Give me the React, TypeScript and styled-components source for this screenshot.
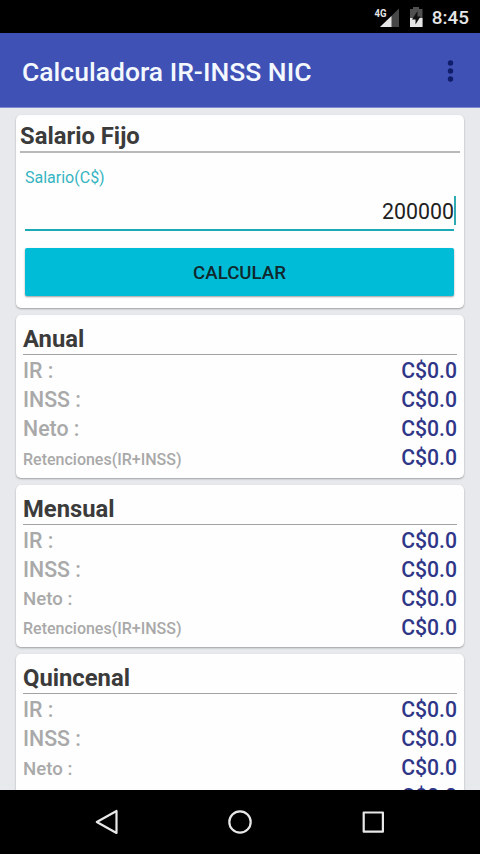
import React from "react";
import styled, { createGlobalStyle } from "styled-components";

const GlobalStyle = createGlobalStyle`
  * { box-sizing: border-box; }
  html, body { margin: 0; padding: 0; background: #000; }
  body { font-family: Roboto, "Noto Sans", sans-serif; }
`;

const Screen = styled.div`
  display: flex;
  flex-direction: column;
  width: 480px;
  height: 854px;
  overflow: hidden;
  background: #e8e9ed;
`;

const StatusBar = styled.header`
  display: flex;
  flex: none;
  align-items: center;
  justify-content: flex-end;
  height: 33px;
  padding: 2px 11px 0 0;
  background: #000;
`;

const StatusIcons = styled.svg`
  display: block;
  margin: 0 9px 2px 0;
`;

const Clock = styled.span`
  font-size: 18.9px;
  font-weight: 500;
  line-height: 22px;
  color: #e6e6e6;
`;

const AppBar = styled.div`
  display: flex;
  flex: none;
  align-items: center;
  justify-content: space-between;
  height: 75px;
  padding: 2px 26px 0 22px;
  background: #3f51b5;
  border-bottom: 1px solid #7f8bd0;
`;

const AppTitle = styled.h1`
  margin: 0;
  padding-top: 1px;
  font-size: 26.5px;
  font-weight: 500;
  line-height: 32px;
  color: #f3f8ff;
  white-space: nowrap;
`;

const MenuButton = styled.button`
  display: block;
  padding: 0;
  border: 0;
  background: none;
  svg { display: block; }
`;

const Content = styled.main`
  display: flex;
  flex: 1;
  flex-direction: column;
  gap: 7px;
  min-height: 0;
  padding: 7px 16px 0;
  overflow: hidden;
`;

const Card = styled.section<{ $height: number; $inset: number }>`
  flex: none;
  height: ${(p) => p.$height}px;
  padding: ${(p) => p.$inset}px ${(p) => p.$inset}px 0;
  background: #fefefe;
  border-radius: 5px;
  box-shadow: 0 1px 2px rgba(0, 0, 0, 0.32);
`;

const CardTitle = styled.h2<{ $rule: string; $height: number }>`
  height: ${(p) => p.$height}px;
  margin: 0;
  border-bottom: ${(p) => p.$rule};
  font-size: 23.8px;
  font-weight: 700;
  line-height: 34px;
  color: #3b3b3b;
`;

const Form = styled.div`
  display: flex;
  flex-direction: column;
  padding: 15px 6px 0 5px;
`;

const FieldLabel = styled.label`
  font-size: 16px;
  line-height: 20px;
  color: #35b4c1;
`;

const Field = styled.div`
  display: flex;
  align-items: center;
  justify-content: flex-end;
  height: 43px;
  padding-top: 6px;
  border-bottom: 2px solid #1aa9b5;
  font-size: 21.33px;
  color: #212121;
`;

const Caret = styled.span`
  width: 2px;
  height: 29px;
  margin: -2px -2px 0 0;
  background: #2fa9b2;
`;

const SubmitButton = styled.button`
  height: 48px;
  margin-top: 17px;
  padding: 1px 0 0;
  border: 0;
  border-radius: 2px;
  background: #00bcd7;
  box-shadow: 0 1px 2px rgba(0, 0, 0, 0.38);
  font-family: inherit;
  font-size: 18.67px;
  font-weight: 500;
  color: #10282d;
`;

const Rows = styled.dl`
  margin: 0;
  padding-top: 1px;
`;

const Row = styled.div`
  display: flex;
  align-items: center;
  justify-content: space-between;
  height: 29px;
`;

const RowLabel = styled.dt<{ $size: number }>`
  padding-top: ${(p) => (p.$size < 17 ? 3 : p.$size < 20 ? 2 : 0)}px;
  font-size: ${(p) => p.$size}px;
  font-weight: 500;
  color: #a9a9a9;
`;

const RowValue = styled.dd`
  margin: 0;
  font-size: 21.2px;
  font-weight: 500;
  color: #2f3688;
`;

const NavBar = styled.nav`
  flex: none;
  height: 64px;
  background: #000;
  svg { display: block; }
`;

const BIG = 21.33;
const MID = 18.67;
const SMALL = 16;

const periods = [
  { title: "Anual", netSize: BIG },
  { title: "Mensual", netSize: MID },
  { title: "Quincenal", netSize: MID },
];

function ResultCard({ title, netSize }: { title: string; netSize: number }) {
  const rows = [
    { label: "IR :", size: BIG },
    { label: "INSS :", size: BIG },
    { label: "Neto :", size: netSize },
    { label: "Retenciones(IR+INSS)", size: SMALL },
  ];
  return (
    <Card $height={162.5} $inset={7}>
      <CardTitle $height={33} $rule="1px solid #a3a3a3">{title}</CardTitle>
      <Rows>
        {rows.map((row) => (
          <Row key={row.label}>
            <RowLabel $size={row.size}>{row.label}</RowLabel>
            <RowValue>C$0.0</RowValue>
          </Row>
        ))}
      </Rows>
    </Card>
  );
}

export default function App() {
  return (
    <>
      <GlobalStyle />
      <Screen>
        <StatusBar>
          <StatusIcons width="49" height="24" viewBox="0 0 49 24">
            <path d="M25 3.500V22H6Z" fill="#474747" />
            <path d="M17.500 11V22H6Z" fill="#e6e6e6" />
            <text x="0.500" y="11.500" fontSize="11.500" fontWeight="700" fill="#e6e6e6" stroke="#000" strokeWidth="1.500" paintOrder="stroke" textLength="12" lengthAdjust="spacingAndGlyphs" fontFamily="Roboto, sans-serif">4G</text>
            <path d="M36 4H39V2H45V4H48.500V22H36Z" fill="#505050" />
            <path d="M36 13H48.500V22H36Z" fill="#e6e6e6" />
            <path d="M43.500 6L38 14.500H41.500V19.500L46.500 11.500H43.500Z" fill="#111" />
          </StatusIcons>
          <Clock>8:45</Clock>
        </StatusBar>
        <AppBar>
          <AppTitle>Calculadora IR-INSS NIC</AppTitle>
          <MenuButton aria-label="Más opciones">
            <svg width="7" height="24" viewBox="0 0 7 24">
              <circle cx="3.500" cy="4" r="2.700" fill="#101d6b" />
              <circle cx="3.500" cy="12" r="2.700" fill="#101d6b" />
              <circle cx="3.500" cy="20" r="2.700" fill="#101d6b" />
            </svg>
          </MenuButton>
        </AppBar>
        <Content>
          <Card $height={193} $inset={4}>
            <CardTitle $height={34} $rule="2px solid #b9b9b9">Salario Fijo</CardTitle>
            <Form>
              <FieldLabel>Salario(C$)</FieldLabel>
              <Field>
                200000
                <Caret />
              </Field>
              <SubmitButton>CALCULAR</SubmitButton>
            </Form>
          </Card>
          {periods.map((p) => (
            <ResultCard key={p.title} {...p} />
          ))}
        </Content>
        <NavBar>
          <svg width="480" height="64" viewBox="0 0 480 64" fill="none" stroke="#e8e8e8" strokeWidth="2.200" strokeLinejoin="round">
            <path d="M96.800 32L116.500 21V43Z" />
            <circle cx="240" cy="32" r="10.700" />
            <rect x="363.700" y="22.500" width="19.200" height="19.200" />
          </svg>
        </NavBar>
      </Screen>
    </>
  );
}
